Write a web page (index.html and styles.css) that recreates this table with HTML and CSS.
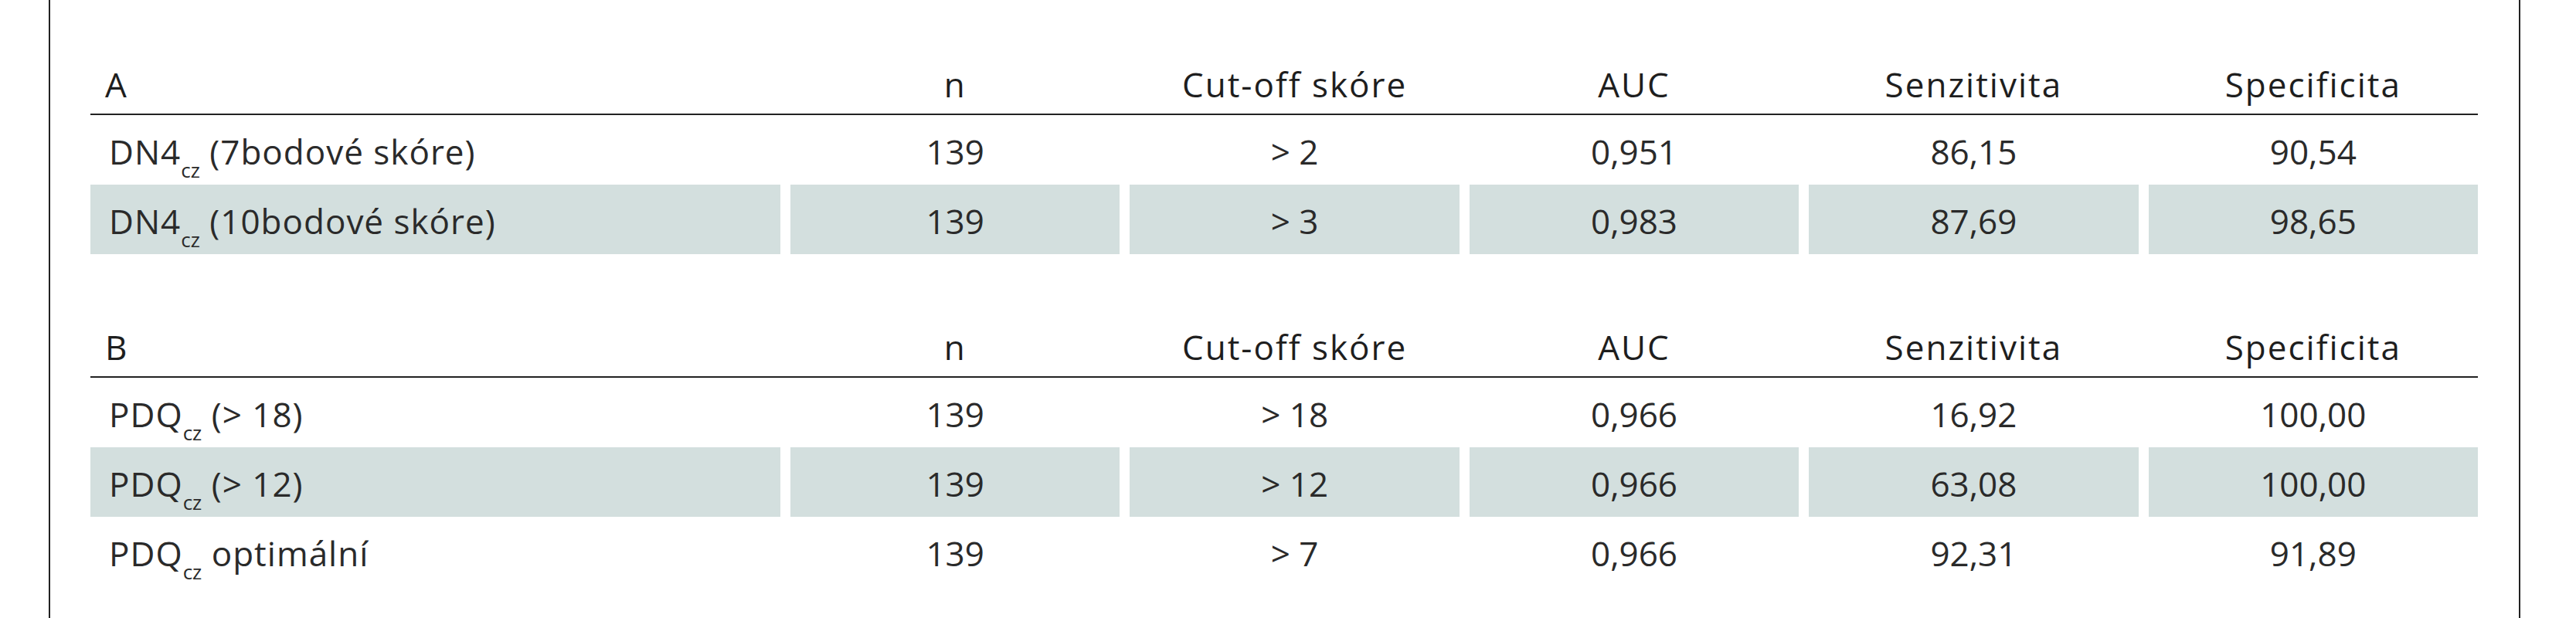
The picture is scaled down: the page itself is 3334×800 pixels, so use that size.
FILE: index.html
```html
<!DOCTYPE html>
<html lang="cs">
<head>
<meta charset="utf-8">
<title>DN4cz a PDQcz – ROC analýza</title>
<link rel="stylesheet" href="styles.css">
</head>
<body>
<div class="frame">
  <section class="tbl">
    <div class="row head">
      <div class="cell label">A</div>
      <div class="cell">n</div>
      <div class="cell">Cut-off skóre</div>
      <div class="cell">AUC</div>
      <div class="cell">Senzitivita</div>
      <div class="cell">Specificita</div>
    </div>
    <div class="row">
      <div class="cell label">DN4<sub>cz</sub> (7bodové skóre)</div>
      <div class="cell">139</div>
      <div class="cell">&gt; 2</div>
      <div class="cell">0,951</div>
      <div class="cell">86,15</div>
      <div class="cell">90,54</div>
    </div>
    <div class="row shade">
      <div class="cell label">DN4<sub>cz</sub> (10bodové skóre)</div>
      <div class="cell">139</div>
      <div class="cell">&gt; 3</div>
      <div class="cell">0,983</div>
      <div class="cell">87,69</div>
      <div class="cell">98,65</div>
    </div>
  </section>

  <section class="tbl tbl-b">
    <div class="row head">
      <div class="cell label">B</div>
      <div class="cell">n</div>
      <div class="cell">Cut-off skóre</div>
      <div class="cell">AUC</div>
      <div class="cell">Senzitivita</div>
      <div class="cell">Specificita</div>
    </div>
    <div class="row">
      <div class="cell label">PDQ<sub>cz</sub> (&gt; 18)</div>
      <div class="cell">139</div>
      <div class="cell">&gt; 18</div>
      <div class="cell">0,966</div>
      <div class="cell">16,92</div>
      <div class="cell">100,00</div>
    </div>
    <div class="row shade">
      <div class="cell label">PDQ<sub>cz</sub> (&gt; 12)</div>
      <div class="cell">139</div>
      <div class="cell">&gt; 12</div>
      <div class="cell">0,966</div>
      <div class="cell">63,08</div>
      <div class="cell">100,00</div>
    </div>
    <div class="row">
      <div class="cell label">PDQ<sub>cz</sub> optimální</div>
      <div class="cell">139</div>
      <div class="cell">&gt; 7</div>
      <div class="cell">0,966</div>
      <div class="cell">92,31</div>
      <div class="cell">91,89</div>
    </div>
  </section>
</div>
</body>
</html>
```

FILE: styles.css
```css
* {
  box-sizing: border-box;
}

html,
body {
  margin: 0;
  padding: 0;
  background: #ffffff;
}

body {
  overflow: hidden;
  font-family: "Open Sans", "Noto Sans", "Liberation Sans", sans-serif;
  font-weight: 400;
  font-size: 44px;
  color: #2a2a2a;
}

.frame {
  margin-left: 63px;
  width: 3199px;
  height: 800px;
  border-left: 2px solid #222222;
  border-right: 2px solid #222222;
  padding: 57px 53px 0 52px;
}

.tbl-b {
  margin-top: 68px;
}

.row {
  display: grid;
  grid-template-columns: 893px repeat(5, 1fr);
  column-gap: 13px;
  height: 90px;
}

.row.head {
  height: 92px;
  border-bottom: 2px solid #222222;
}

.cell {
  text-align: center;
  white-space: nowrap;
  padding-top: 4px;
  line-height: 86px;
  letter-spacing: 0;
}

.head .cell {
  padding-top: 14px;
  line-height: 76px;
  letter-spacing: 2px;
  color: #1e1e1e;
}

.label {
  text-align: left;
  padding-left: 24px;
  letter-spacing: 1px;
}

.head .label {
  padding-left: 19px;
}

.shade .cell {
  background: #d3dfde;
}

sub {
  font-size: 26px;
  line-height: 0;
  vertical-align: -17px;
  letter-spacing: 0;
}
```
